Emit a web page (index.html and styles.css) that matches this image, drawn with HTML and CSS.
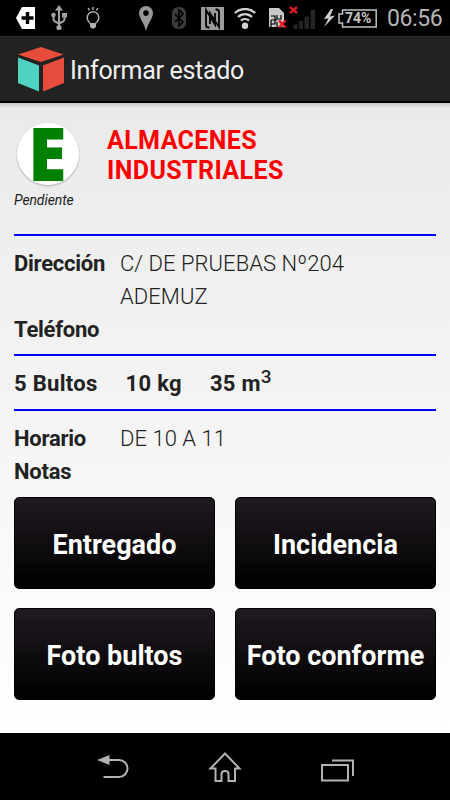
FILE: index.html
```html
<!DOCTYPE html>
<html lang="es">
<head>
<meta charset="utf-8">
<title>Informar estado</title>
<meta name="viewport" content="width=device-width, initial-scale=1.0">
<link rel="stylesheet" href="styles.css">
</head>
<body>
    <div class="status-bar">
        <svg class="icon-tag" width="19" height="22" viewBox="0 0 19 22"><path d="M6 0H19V22H6L0 11Z" fill="#fff"/><path d="M11.500 5V17M5.500 11H17.500" stroke="#000" stroke-width="3.400"/></svg>
        <svg class="icon-usb" width="16" height="26" viewBox="0 0 16 26" fill="none" stroke="#a2a2a2" stroke-width="2">
            <path d="M8 4V22M2.500 9V14Q2.500 16 5 17L8 18.500M13.500 10V14Q13.500 16 11 17L8 18.500"/>
            <path d="M8 0L12 5.500H4ZM11 8H16V12.500H11Z" fill="#a2a2a2" stroke="none"/>
            <circle cx="2.500" cy="10" r="2.300" fill="#a2a2a2" stroke="none"/><circle cx="8" cy="22.500" r="2.600" fill="#a2a2a2" stroke="none"/>
        </svg>
        <svg class="icon-bulb" width="14" height="22" viewBox="0 0 14 22" fill="none" stroke="#b0b0b0" stroke-width="1.500">
            <path d="M4.500 17Q4.500 16 2.700 14.500A5.800 5.800 0 1 1 11.300 14.500Q9.500 16 9.500 17Z"/>
            <path d="M7 0V3M2.200 1L3.500 3.500M11.800 1L10.500 3.500"/><path d="M4 16H10V20L8 21.500H6L4 20Z" fill="#b0b0b0" stroke="none"/>
        </svg>
        <svg class="icon-pin" width="14" height="25" viewBox="0 0 14 25"><path fill-rule="evenodd" d="M7 0A7 7 0 0 1 14 7C14 12 9 17 7 25C5 17 0 12 0 7A7 7 0 0 1 7 0ZM7 4.300A2.800 2.800 0 1 0 7 9.900A2.800 2.800 0 1 0 7 4.300Z" fill="#979797"/></svg>
        <svg class="icon-bluetooth" width="14" height="22" viewBox="0 0 14 22"><rect width="14" height="22" rx="6" fill="#3c3c3c"/><path d="M3 7L11 15L7 19V3L11 7L3 15" fill="none" stroke="#000" stroke-width="1.700"/></svg>
        <svg class="icon-nfc" width="23" height="23" viewBox="0 0 23 23"><rect width="23" height="23" fill="#9b9b9b"/><path d="M8.500 20.500H7.500Q5 20.500 5 18V3L14 17.500V6M14.500 2.500H15.500Q18 2.500 18 5V20L9 6V17" fill="none" stroke="#000" stroke-width="1.800"/></svg>
        <svg class="icon-wifi" width="22" height="21" viewBox="0 0 22 21" fill="none" stroke="#d0d0d0" stroke-width="2.300"><path d="M.8 5A15 15 0 0 1 21.200 5M4 9A10 10 0 0 1 18 9M7 12.700A6 6 0 0 1 15 12.700"/><circle cx="11" cy="17.700" r="3.200" fill="#d0d0d0" stroke="none"/></svg>
        <svg class="icon-sim" width="18" height="21" viewBox="0 0 18 21"><path d="M0 0H10L15 5V19H0Z" fill="#c8c8c8"/><path d="M2 8H6V12M2 12H8M8 7V11H12V7M2 12V16H6V12M2 19V16M8 14V19" fill="none" stroke="#000" stroke-width="1.200"/><path d="M10 12.500L16.500 19.500M16.500 12.500L10 19.500" stroke="#e01b24" stroke-width="2.500"/></svg>
        <svg class="icon-signal" width="26" height="22" viewBox="0 0 26 22"><path d="M4.500 17.500H8.500V22H4.500ZM10 14H14V22H10ZM15.500 9.500H20V22H15.500ZM21.500 3H26V22H21.500Z" fill="#242424"/><path d="M1 0L8 6M8 0L1 6" stroke="#d51c22" stroke-width="2.500"/></svg>
        <svg class="icon-bolt" width="12" height="18" viewBox="0 0 12 18"><path d="M8 0L1 10L5.500 9.500L1 18L12 6.500L7 7.500L10 0Z" fill="#d0d0d0"/></svg>
        <div class="battery">
            <svg class="battery-outline" width="39" height="19" viewBox="0 0 39 19" fill="none" stroke="#c2c2c2" stroke-width="1.500"><path d="M4.500 1H38.200V18H4.500V14H1V5H4.500Z"/></svg>
            <span class="battery-text">74%</span>
        </div>
        <span class="clock">06:56</span>
    </div>

    <div class="action-bar">
        <svg class="logo" width="48" height="46" viewBox="0 0 48 46">
            <path d="M24 0L46.500 7.500L24 15L1 7.500Z" fill="#e84c3d"/>
            <path d="M1 10.500L22 18.500V44.500L1 36Z" fill="#50d2c2"/>
            <path d="M26 18.500L47 10.500V36L26 44.500Z" fill="#e84c3d"/>
        </svg>
        <h1 class="title">Informar estado</h1>
    </div>

    <div class="content">
        <div class="client">
            <div class="state">
                <div class="state-badge"><span class="state-letter">E</span></div>
                <span class="state-text">Pendiente</span>
            </div>
            <h2 class="client-name">ALMACENES<br>INDUSTRIALES</h2>
        </div>

        <div class="section address">
            <span class="label">Dirección</span>
            <span class="value">C/ DE PRUEBAS Nº204<br>ADEMUZ</span>
            <span class="label">Teléfono</span>
        </div>

        <div class="section totals">
            <span>5 Bultos</span>
            <span>10 kg</span>
            <span>35 m<sup>3</sup></span>
        </div>

        <div class="section schedule">
            <span class="label">Horario</span>
            <span class="value">DE 10 A 11</span>
            <span class="label">Notas</span>
        </div>

        <div class="actions">
            <button class="btn">Entregado</button>
            <button class="btn">Incidencia</button>
            <button class="btn">Foto bultos</button>
            <button class="btn">Foto conforme</button>
        </div>
    </div>

    <div class="nav-bar">
        <svg width="34" height="32" viewBox="0 0 34 32"><path d="M13 9H23A8.500 8.500 0 0 1 23 26H7.500" fill="none" stroke="#b2b2b2" stroke-width="2"/><path d="M1 9L13.500 4V14Z" fill="#b2b2b2"/></svg>
        <svg width="34" height="32" viewBox="0 0 34 32" fill="none" stroke="#b2b2b2" stroke-width="2"><path d="M17 2.500L31.500 17.500H27V30H20.500V23Q20.500 20 17 20Q13.500 20 13.500 23V30H7.500V17.500H2.500Z"/></svg>
        <svg width="34" height="32" viewBox="0 0 34 32" fill="none" stroke="#b2b2b2" stroke-width="2"><path d="M2 14H28V29.500H2ZM12 9.500H33V25"/></svg>
    </div>
</body>
</html>
```
FILE: styles.css
```css
* {
    box-sizing: border-box;
}

body {
    margin: 0;
    height: 800px;
    display: flex;
    flex-direction: column;
    overflow: hidden;
    font-family: Roboto, sans-serif;
    background-color: #000;
    color: #222;
}

svg {
    display: block;
    flex: none;
}

/* Barra de estado */
.status-bar {
    height: 36px;
    padding-left: 16px;
    display: flex;
    align-items: center;
}

.icon-usb { margin-left: 16px; }
.icon-bulb { margin-left: 19px; }
.icon-pin { margin-left: 39px; }
.icon-bluetooth { margin-left: 19px; }
.icon-nfc { margin-left: 15px; }
.icon-wifi { margin-left: 10px; }
.icon-sim { margin-left: 13px; }
.icon-signal { margin-left: 2px; overflow: visible; }
.icon-bolt { margin-left: 8px; }

.battery {
    width: 39px;
    height: 19px;
    margin-left: 3px;
    position: relative;
}

.battery-text {
    position: absolute;
    left: 7px;
    top: 1px;
    font-size: 14px;
    font-weight: bold;
    line-height: 17px;
    color: #c2c2c2;
}

.clock {
    margin: 2px 0 0 10px;
    font-size: 23px;
    letter-spacing: -0.4px;
    line-height: 34px;
    color: #b5b5b5;
}

/* Cabecera */
.action-bar {
    height: 67px;
    padding: 2px 0 0 17px;
    display: flex;
    align-items: center;
    background-color: #222;
    border-top: 1px solid #2c2c2c;
    border-bottom: 2px solid #000;
}

.title {
    margin: 0 0 0 5px;
    font-size: 25px;
    font-weight: normal;
    letter-spacing: -0.3px;
    color: #f0f0f0;
}

/* Contenido */
.content {
    height: 630px;
    padding: 18px 14px 0;
    background: linear-gradient(#c4c4c4, transparent 5px), linear-gradient(#eaeaea, #fff);
}

.client {
    height: 113px;
    display: flex;
}

.state {
    width: 93px;
}

.state-badge {
    width: 62px;
    height: 62px;
    margin: 2px 0 0 3px;
    display: flex;
    align-items: center;
    justify-content: center;
    border-radius: 50%;
    background-color: #fff;
    box-shadow: 0 1px 2px #aaa;
}

.state-letter {
    margin-top: -3px;
    margin-left: -2px;
    font-family: "Open Sans", sans-serif;
    font-size: 74px;
    font-weight: 800;
    line-height: 62px;
    color: #008000;
    transform: scaleX(0.95);
}

.state-text {
    display: block;
    margin-top: 7px;
    font-size: 14px;
    font-style: italic;
    letter-spacing: -0.1px;
    line-height: 16px;
}

.client-name {
    margin: 5px 0 0;
    font-size: 25px;
    font-weight: bold;
    letter-spacing: 0.4px;
    line-height: 30px;
    color: #f00;
}

.section {
    border-top: 2px solid #0000f8;
    font-size: 22px;
    line-height: 33px;
}

.address,
.schedule {
    display: grid;
    grid-template-columns: 106px 1fr;
    align-content: start;
}

.address {
    height: 120px;
    padding-top: 11px;
}

.label {
    font-weight: bold;
    letter-spacing: -0.25px;
}

.value {
    font-weight: 300;
    letter-spacing: 0.05px;
}

.totals {
    height: 55px;
    padding-top: 11px;
    display: flex;
    gap: 28px;
    font-weight: bold;
    letter-spacing: 0.3px;
}

.totals sup {
    font-size: 19px;
    font-weight: 500;
    line-height: 0;
}

.schedule {
    height: 88px;
    padding-top: 11px;
}

.actions {
    display: grid;
    grid-template-columns: 201px 201px;
    grid-auto-rows: 92px;
    gap: 19px 20px;
}

.btn {
    padding: 3px 0 0;
    border: 1px solid #000;
    border-radius: 5px;
    background: linear-gradient(#201a21, #000);
    font-family: inherit;
    font-size: 27px;
    font-weight: bold;
    color: #fff;
}

/* Barra de navegación */
.nav-bar {
    height: 67px;
    padding: 0 96px;
    display: flex;
    align-items: center;
    justify-content: space-between;
}
```
